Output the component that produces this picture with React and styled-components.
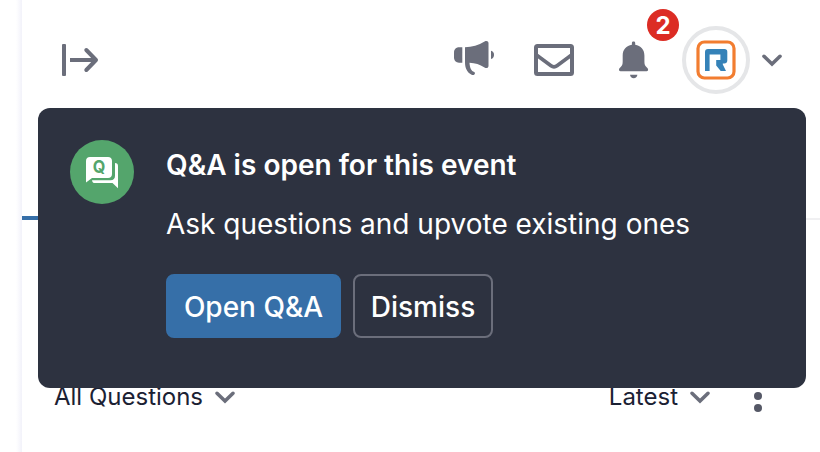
import { useState } from 'react'
import styled, { createGlobalStyle } from 'styled-components'

const GlobalStyle = createGlobalStyle`
  * {
    box-sizing: border-box;
  }
  body {
    margin: 0;
    background: #fff;
    color: #1b2133;
    font-family: Inter, 'Liberation Sans', sans-serif;
  }
  button {
    padding: 0;
    border: 0;
    background: none;
    color: inherit;
    font: inherit;
    cursor: pointer;
  }
  svg {
    display: block;
    flex: none;
    overflow: visible;
  }
`

const Page = styled.div`
  display: flex;
  position: relative;
  width: 820px;
  height: 452px;
  overflow: hidden;
`

const Gutter = styled.div`
  flex: none;
  width: 22px;
  background: linear-gradient(to right, #fff 16px, #f2f2fa 22px);
`

const Panel = styled.main`
  display: flex;
  flex: 1;
  flex-direction: column;
`

const Header = styled.header`
  display: flex;
  align-items: center;
  justify-content: space-between;
  height: 120px;
  padding: 0 38px 0 40px;
  color: #6b6e7b;
`

const Actions = styled.div`
  display: flex;
  align-items: center;
`

const IconButton = styled.button`
  display: flex;
  position: relative;
  margin-right: ${({ $gap }) => $gap || 0}px;
`

const Badge = styled.span`
  position: absolute;
  top: -33px;
  left: 29px;
  width: 32px;
  height: 32px;
  border-radius: 50%;
  background: #dc2c24;
  color: #fff;
  font-size: 24px;
  font-weight: 700;
  line-height: 33px;
  text-align: center;
`

const Avatar = styled.div`
  display: flex;
  align-items: center;
  justify-content: center;
  width: 68px;
  height: 68px;
  margin-right: 12px;
  border: 4px solid #e5e6e8;
  border-radius: 50%;
`

const Tabs = styled.div`
  display: flex;
  height: 100px;
  box-shadow: inset 0 -2px #f0f0f2;
`

const Tab = styled.div`
  width: 260px;
  border-bottom: 4px solid #366fa8;
`

const Filters = styled.div`
  display: flex;
  align-items: center;
  height: 40px;
  margin-top: 157px;
  padding: 0 58px 0 32px;
`

const Filter = styled.button`
  display: flex;
  align-items: center;
  gap: 12px;
  margin-left: ${({ $right }) => ($right ? 'auto' : 0)};
  margin-right: ${({ $right }) => ($right ? '44px' : 0)};
  font-size: 24px;
  line-height: 40px;
  svg {
    color: #6b6e7b;
  }
`

const More = styled.button`
  display: flex;
  flex-direction: column;
  gap: 4px;
  padding-bottom: 2px;
  span {
    width: 8px;
    height: 8px;
    border-radius: 50%;
    background: #555866;
  }
`

const Toast = styled.section`
  display: flex;
  position: absolute;
  top: 108px;
  left: 38px;
  width: 768px;
  height: 280px;
  padding: 32px;
  gap: 32px;
  border-radius: 12px;
  background: #2d3240;
  color: #fff;
  font-size: 28px;
`

const ToastIcon = styled.div`
  display: flex;
  flex: none;
  align-items: center;
  justify-content: center;
  width: 64px;
  height: 64px;
  border-radius: 50%;
  background: #54a56c;
`

const Title = styled.h1`
  margin: 5px 0 0;
  font-size: 28px;
  font-weight: 600;
  line-height: 40px;
  white-space: nowrap;
`

const Text = styled.p`
  margin: 19px 0 30px;
  line-height: 40px;
  white-space: nowrap;
`

const Buttons = styled.div`
  display: flex;
  gap: 12px;
`

const Button = styled.button`
  width: ${({ $primary }) => ($primary ? 175 : 140)}px;
  height: 64px;
  border: 2px solid ${({ $primary }) => ($primary ? '#366fa8' : '#6b6e7b')};
  border-radius: 8px;
  background: ${({ $primary }) => ($primary ? '#366fa8' : 'transparent')};
  color: #fff;
  font-weight: 500;
  line-height: 62px;
  white-space: nowrap;
`

const ExpandIcon = () => (
  <svg width="38" height="32" viewBox="0 0 38 32" fill="none" stroke="currentColor" strokeWidth="4">
    <rect x="0" y="0" width="4" height="32" rx="1" fill="currentColor" stroke="none" />
    <path d="M8 16H33" />
    <path d="M24.300 6 34 16l-9.700 10" strokeLinecap="round" strokeLinejoin="round" />
  </svg>
)

const MegaphoneIcon = () => (
  <svg width="40" height="38" viewBox="0 0 40 38" fill="currentColor">
    <path d="M8.300 6.300v15.400H5C2 21.700 0 19.500 0 16.500v-5C0 8.500 2 6.300 5 6.300z" />
    <path d="M11 6.300c7-.1 13.500-2 19.600-5.700 1.900-1.100 3.900-.3 3.900 1.500v22.800c0 1.800-1.900 2.700-4 1.500-5-3-9-4.500-15-4.700.3 5.200 1.800 8.200 4.700 9.400 1 .5 1 1.700.2 2.400-.9.800-2 .7-3.200 0C12.900 31.100 11 27 11 21z" />
    <path d="M37 9.800c2 .4 3 2 3 4s-1 3.800-3 4.300z" />
  </svg>
)

const MailIcon = () => (
  <svg width="40" height="32" viewBox="0 0 40 32" fill="none" stroke="currentColor" strokeWidth="4">
    <rect x="2" y="2" width="36" height="28" rx="1.500" />
    <path d="M2.500 11 17 21.800Q20 24 23 21.800L37.500 11" strokeWidth="3.600" />
  </svg>
)

const BellIcon = () => (
  <svg width="30" height="36" viewBox="-1 0.500 30 36" fill="currentColor">
    <path d="M13.300 1.500c0-2 3.400-2 3.400 0v2c5.700.8 9.500 5 9.500 11v6c0 3 .4 4.500 2.300 6.300 1.200 1.200 1.500 1.600 1.500 2.700 0 .9-.5 1.500-1.500 1.500h-27C.5 31 0 30.400 0 29.500c0-1.100.3-1.500 1.500-2.700 1.900-1.800 2.300-3.300 2.300-6.300v-6c0-6 3.800-10.200 9.500-11z" transform="scale(.97 .96)" />
    <path d="M11 33.300h7.400c-.3 2.200-1.700 3.500-3.700 3.500s-3.400-1.300-3.700-3.500z" />
  </svg>
)

const ChevronIcon = () => (
  <svg width="20" height="12" viewBox="0 0 20 12" fill="none" stroke="currentColor" strokeWidth="3.600">
    <path d="m2 2.300 8 7.700 8-7.700" strokeLinecap="round" />
  </svg>
)

const LogoIcon = () => (
  <svg width="40" height="40" viewBox="0 0 40 40" fill="none">
    <rect x="2" y="2" width="36" height="36" rx="6.500" stroke="#f27d30" strokeWidth="3.200" />
    <path
      d="M9 31V12c0-2 1-3 3-3h16.500c1.800 0 2.800 1 2.800 2.800v8.700c0 1.800-1.200 3-3 3h-1.500v1l3.200 6.500h-5.300L20.200 25.500V20h4.200v-5.500H13.600V31z"
      fill="#3582b8"
    />
  </svg>
)

const QuestionsIcon = () => (
  <svg width="32" height="30" viewBox="0 0 32 30" fill="#fff">
    <path d="M4 0h18c2.500 0 4 1.500 4 4v13c0 2.500-1.500 4-4 4H6l-6 4.500V4c0-2.500 1.500-4 4-4z" />
    <path d="M29 6c2 0 3 1 3 3v22.200L26.500 26H9c-1.600 0-2.800-.8-3-2.800h18.500c3 0 4.500-1.400 4.500-4.400z" />
    <text
      transform="translate(13 16) scale(.9 1)"
      fill="#54a56c"
      fontFamily="Inter, sans-serif"
      fontSize="18"
      fontWeight="700"
      textAnchor="middle"
    >
      Q
    </text>
  </svg>
)

export default function App() {
  const [open, setOpen] = useState(true)

  return (
    <>
      <GlobalStyle />
      <Page>
        <Gutter />
        <Panel>
          <Header>
            <IconButton aria-label="Collapse"><ExpandIcon /></IconButton>
            <Actions>
              <IconButton aria-label="Announcements" $gap={40}><MegaphoneIcon /></IconButton>
              <IconButton aria-label="Messages" $gap={44}><MailIcon /></IconButton>
              <IconButton aria-label="Notifications" $gap={34}>
                <BellIcon />
                <Badge>2</Badge>
              </IconButton>
              <Avatar><LogoIcon /></Avatar>
              <ChevronIcon />
            </Actions>
          </Header>
          <Tabs><Tab /></Tabs>
          <Filters>
            <Filter>All Questions <ChevronIcon /></Filter>
            <Filter $right>Latest <ChevronIcon /></Filter>
            <More aria-label="More"><span /><span /><span /></More>
          </Filters>
        </Panel>
        {open && (
          <Toast>
            <ToastIcon><QuestionsIcon /></ToastIcon>
            <div>
              <Title>Q&amp;A is open for this event</Title>
              <Text>Ask questions and upvote existing ones</Text>
              <Buttons>
                <Button $primary>Open Q&amp;A</Button>
                <Button onClick={() => setOpen(false)}>Dismiss</Button>
              </Buttons>
            </div>
          </Toast>
        )}
      </Page>
    </>
  )
}
